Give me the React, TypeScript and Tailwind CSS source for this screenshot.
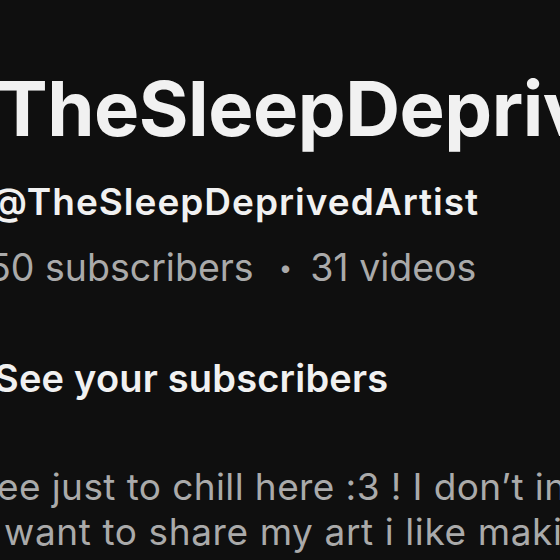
import React from "react";

export default function App() {
  return (
    <div className="w-[560px] h-[560px] overflow-hidden bg-[#0f0f0f] text-[#f1f1f1]">
      <div className="flex flex-col whitespace-nowrap pt-[63px]" style={{ fontFamily: "Inter, 'Noto Sans', sans-serif" }}>
        <div className="ml-[-3px] text-[76px] leading-[90px] font-bold tracking-[-0.5px] text-[#f1f1f1]">TheSleepDeprivedArtist</div>
        <div className="mt-[27px] ml-[-10px] text-[37px] leading-[44px] font-semibold tracking-[1px] text-[#f1f1f1]">@TheSleepDeprivedArtist</div>
        <div className="mt-[22px] ml-[-12px] text-[37.5px] leading-[44px] font-normal text-[#aaaaaa] flex items-center">
          <span>50 subscribers</span>
          <span className="ml-[25px] mr-[18px] text-[24px]">•</span>
          <span>31 videos</span>
        </div>
        <div className="mt-[65px] ml-[-6px] text-[38px] leading-[46px] font-semibold tracking-[0.2px] text-[#f1f1f1]">See your subscribers</div>
        <div className="mt-[63px] text-[37px] leading-[45px] tracking-[0.4px] text-[#aaaaaa]">
          <div className="ml-[-3px]">ee just to chill here :3 ! I don’t intend</div>
          <div className="ml-[4px] tracking-[0.6px]">want to share my art i like making</div>
        </div>
      </div>
    </div>
  );
}
